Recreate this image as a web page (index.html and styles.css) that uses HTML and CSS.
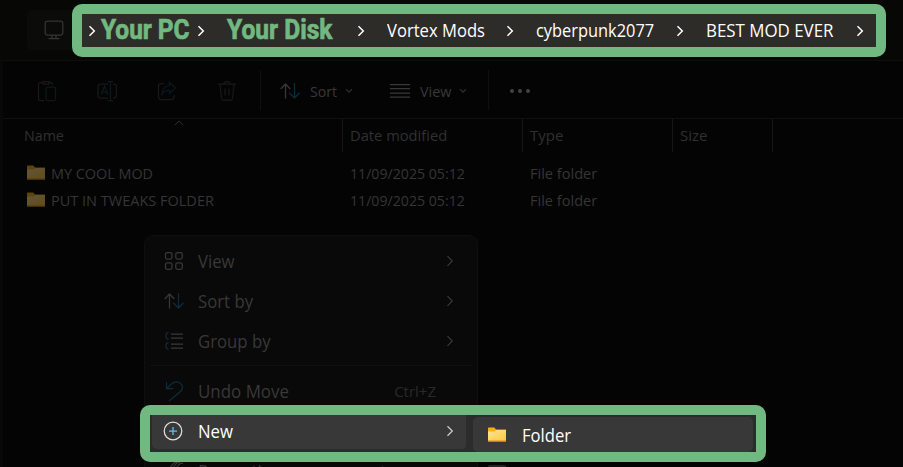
FILE: index.html
```html
<!DOCTYPE html>
<html lang="en">
<head>
<meta charset="utf-8">
<title>BEST MOD EVER - File Explorer</title>
<link rel="stylesheet" href="styles.css">
</head>
<body>
<svg class="defs" aria-hidden="true">
  <defs>
    <linearGradient id="gold" x1="0" y1="0" x2="1" y2="1"><stop offset="0" stop-color="#ffe69c"/><stop offset="1" stop-color="#ffc53a"/></linearGradient>
    <symbol id="chev" viewBox="0 0 8 12"><path d="M1.500 1.200 6.300 6 1.500 10.800"/></symbol>
    <symbol id="down" viewBox="0 0 8 6"><path d="M1 1.200 4 4.200 7 1.200"/></symbol>
    <symbol id="sort" viewBox="0 0 20 18"><path d="M5.500 16.500V2M.7 7 5.500 2l4.800 5"/><path class="blue" d="M14.500 1v15M9.200 10.800l5.300 5.200 5-5.200"/></symbol>
    <symbol id="folder" viewBox="0 0 18 15"><path fill="#f8ae17" d="M0 1.200Q0 .5.7.5h5.600L8 2.500h10v12H0z"/><path fill="url(#gold)" d="M0 4.500h6.600L8.200 3H18v10.700H0z"/><path fill="#dc991e" d="M0 13.500h18v1H0z"/></symbol>
  </defs>
</svg>
<div class="window">
  <header class="address">
    <div class="device"><svg width="20" height="20" viewBox="0 0 20 20"><rect x="1.200" y="1" width="17.600" height="14" rx="2.500"/><path d="M8 15v3M12 15v3M4.500 18.500h11"/></svg></div>
    <nav class="crumbs">
      <svg class="chev c1"><use href="#chev"/></svg><span class="brand pc">Your PC</span>
      <svg class="chev c2"><use href="#chev"/></svg><span class="brand disk">Your Disk</span>
      <svg class="chev c3"><use href="#chev"/></svg><span class="crumb t1">Vortex Mods</span>
      <svg class="chev c4"><use href="#chev"/></svg><span class="crumb t2">cyberpunk2077</span>
      <svg class="chev c5"><use href="#chev"/></svg><span class="crumb t3">BEST MOD EVER</span>
      <svg class="chev c6"><use href="#chev"/></svg>
    </nav>
  </header>
  <div class="toolbar">
    <div class="tools">
      <svg width="20" height="22" viewBox="0 0 20 22"><path d="M7 20.500H3.500Q1.500 20.500 1.500 18.500V4.500Q1.500 2.500 3.500 2.500H6M12 2.500H14Q15.700 2.500 15.700 5M6 1.500h6v2.500H6z"/><rect class="blue" x="9" y="7" width="9.500" height="13.500" rx="1.500"/></svg>
      <svg width="20" height="22" viewBox="0 0 20 22"><path d="M11 18H3.500Q1 18 1 15.500V6.500Q1 4 3.500 4H11M16 4Q20 4 19.500 7V15Q19.500 18 16 18"/><path class="blue" d="M4 15 7.500 6 11 15M5.200 12h4.600M13.500 1.500v19M11 1.500h5M11 20.500h5"/></svg>
      <svg width="20" height="22" viewBox="0 0 20 22"><path d="M7 3.500H4Q1.500 3.500 1.500 6V17Q1.500 19.500 4 19.500H14Q17 19.500 17 17V15"/><path class="blue" d="M12.500 2.500 18.500 8 12.500 13.500V10.500Q8 10 5 14.500 5.500 6 12.500 5.500z"/></svg>
      <svg width="20" height="22" viewBox="0 0 20 22"><path d="M1 4h18M3 4l1.500 14.500Q4.700 20 6 20h8Q15.300 20 15.500 18.500L17 4M7 4Q7 1.500 10 1.500T13 4M8 8.500v7M12 8.500v7"/></svg>
    </div>
    <div class="group sorting"><svg class="sort"><use href="#sort"/></svg><span>Sort</span><svg class="down"><use href="#down"/></svg></div>
    <div class="group viewing"><svg width="20" height="14" viewBox="0 0 20 14"><path d="M0 .5h20M0 4.500h20M0 9h20M0 13h20"/></svg><span>View</span><svg class="down"><use href="#down"/></svg></div>
    <div class="more"><i></i><i></i><i></i></div>
  </div>
  <main class="files">
    <div class="columns">
      <div class="name"><span>Name</span><svg class="asc" width="10" height="6" viewBox="0 0 10 6"><path d="M.8 5 5 1l4.200 4"/></svg></div><div><span class="date-label">Date modified</span></div><div>Type</div><div>Size</div>
    </div>
    <div class="file"><span class="name"><svg class="folder"><use href="#folder"/></svg><b class="n1">MY COOL MOD</b></span><span class="date">11/09/2025 05:12</span><span class="type">File folder</span></div>
    <div class="file"><span class="name"><svg class="folder"><use href="#folder"/></svg><b class="n2">PUT IN TWEAKS FOLDER</b></span><span class="date">11/09/2025 05:12</span><span class="type">File folder</span></div>
  </main>
</div>
<div class="menu">
  <div class="item"><svg width="20" height="20" viewBox="0 0 20 20"><rect x="1.500" y="1.500" width="6.500" height="6.500" rx="1.800"/><rect x="11.800" y="1.500" width="6.500" height="6.500" rx="1.800"/><rect x="1.500" y="11.800" width="6.500" height="6.500" rx="1.800"/><rect x="11.800" y="11.800" width="6.500" height="6.500" rx="1.800"/></svg><span class="m1">View</span><svg class="chev"><use href="#chev"/></svg></div>
  <div class="item"><svg class="sort"><use href="#sort"/></svg><span class="m2">Sort by</span><svg class="chev"><use href="#chev"/></svg></div>
  <div class="item"><svg width="20" height="20" viewBox="0 0 20 20"><path class="blue" d="M4.500 1.500Q2 1.500 2 4V5.500Q2 8 4.500 8M4.500 11.500Q2 11.500 2 14V15.500Q2 18 4.500 18"/><path d="M7 3h12M7 7h12M7 13h12M7 17h12"/></svg><span class="m3">Group by</span><svg class="chev"><use href="#chev"/></svg></div>
  <hr>
  <div class="item undo"><svg width="20" height="22" viewBox="0 0 20 22"><path class="blue" d="M2.500 2v6.500H9M2.500 8.500 8 3.500Q12 .5 16 3T17.500 10.500L5 21"/></svg><span class="m4">Undo Move</span><kbd>Ctrl+Z</kbd></div>
  <div class="item below"><svg width="20" height="20" viewBox="0 0 20 20"><path d="M6 7Q9 1 13 1M9 7Q12 1 16 1M13 6Q15 2 19 2"/></svg><span>Properties</span><kbd>Alt+Enter</kbd></div>
</div>
<div class="clipped"></div>
<div class="spotlight">
  <div class="choice new"><svg width="20" height="20" viewBox="0 0 20 20"><circle cx="10" cy="10" r="8.800"/><path class="bright" d="M10 6v8M6 10h8"/></svg><span>New</span><svg class="chev"><use href="#chev"/></svg></div>
  <div class="choice sub"><svg class="folder"><use href="#folder"/></svg><span>Folder</span></div>
</div>
</body>
</html>
```
FILE: styles.css
```css
* { box-sizing: border-box; }
body { margin: 0; width: 903px; height: 467px; position: relative; overflow: hidden; background: #040404; color: #383838; font-family: "Open Sans", "Noto Sans", sans-serif; font-size: 15px; }
svg { display: block; flex: none; fill: none; stroke: currentColor; stroke-width: 1.25; }
span, kbd, b { white-space: nowrap; transform-origin: 0 50%; }
.defs { position: absolute; width: 0; height: 0; }
.blue { stroke: #0c2c3d; }
.chev { width: 8px; height: 12px; }
.sort { width: 20px; height: 18px; }
.down { width: 8px; height: 6px; }
.folder { width: 18px; height: 15px; stroke: none; }
.window { height: 467px; border-left: 3px solid #080808; }
.address { display: flex; height: 61px; margin-left: -3px; padding-left: 27px; background: #070705; border-bottom: 1px solid #0e0e0e; }
.device { width: 45px; height: 40px; margin-top: 10px; padding: 10px 0 0 17px; border-radius: 5px 0 0 5px; background: #0b0b09; color: #353535; }
.crumbs { display: flex; align-items: center; width: 814px; height: 53px; margin-top: 4px; border: 10px solid #72b881; border-radius: 10px; background: #2e2c28; color: #fff; }
.crumbs .chev { stroke-width: 1.5; }
.crumbs span { flex: none; }
.c1 { margin-left: 6px; }
.brand { height: 33px; color: #72b881; font: 700 27px/32px "Roboto", sans-serif; -webkit-text-stroke: .7px #72b881; }
.pc { width: 91px; margin-left: 5px; transform: scaleX(.905); }
.c2 { margin-left: 5px; }
.disk { width: 108px; margin-left: 22px; transform: scaleX(.91); }
.c3 { margin-left: 22px; }
.crumb { font-size: 18px; line-height: 33px; }
.t1 { width: 98px; margin-left: 22px; transform: scaleX(.923); }
.c4 { margin-left: 21px; }
.t2 { width: 119px; margin-left: 22px; transform: scaleX(.91); }
.c5 { margin-left: 21px; }
.t3 { width: 128px; margin-left: 22px; transform: scaleX(.938); }
.c6 { margin-left: 22px; }
.toolbar { display: flex; align-items: center; height: 58px; border-bottom: 1px solid #101010; }
.tools { display: flex; gap: 40px; width: 258px; height: 40px; padding: 10px 0 0 34px; border-right: 1px solid #0f0f0f; color: #181818; }
.tools .blue { stroke: #0a1820; }
.group { display: flex; align-items: center; height: 40px; }
.group svg, .group span { margin-top: 2px; }
.sorting { width: 110px; padding-left: 19px; }
.sorting span { width: 27px; margin-left: 10px; margin-right: 8px; transform: scaleX(.94); }
.viewing { width: 118px; padding-left: 19px; border-right: 1px solid #0f0f0f; }
.viewing span { width: 32px; margin-left: 10px; margin-right: 7px; transform: scaleX(.96); }
.down { opacity: .8; }
.more { display: flex; gap: 4px; margin: 2px 0 0 21px; }
.more i { width: 4px; height: 4px; border-radius: 50%; background: #434343; }
.columns { display: grid; grid-template-columns: 340px 180px 150px 100px; height: 33px; line-height: 33px; color: #303030; }
.columns div { padding-left: 7px; border-right: 1px solid #171717; }
.columns span { display: inline-block; }
.columns .name { position: relative; padding-left: 21px; }
.columns .name span { transform: scaleX(.95); }
.columns .date-label { transform: scaleX(.98); }
.asc { position: absolute; left: 171px; top: 1px; stroke-width: 1; }
.file { display: grid; grid-template-columns: 347px 180px 150px; height: 27px; line-height: 27px; color: #353535; }
.columns + .file { margin-top: 8px; }
.file .name { display: flex; align-items: center; gap: 6px; padding-left: 24px; }
.file .folder { opacity: .37; margin-top: -3px; }
.file b { font-weight: 400; }
.n1 { transform: scaleX(.96); }
.n2 { transform: scaleX(.967); }
.date { transform: scaleX(.943); }
.type { transform: scaleX(.97); }
.menu { position: absolute; left: 144px; top: 235px; width: 334px; height: 232px; padding: 5px 0 0; border: 1px solid #0f0f0f; border-bottom: 0; border-radius: 9px 9px 0 0; background: #090909; font-size: 18px; overflow: hidden; }
.item { display: flex; align-items: center; height: 40px; padding: 0 24px 0 19px; }
.item span { margin-left: 14px; margin-top: -1px; transform: scaleX(.93); }
.item > .chev, .item kbd { margin-left: auto; }
.item > .chev { margin-right: -1px; margin-top: -1px; stroke-width: 1.2; }
.item kbd { font: 15px "Open Sans", sans-serif; margin-right: 17px; color: #292929; }
.menu hr { height: 1px; margin: 4px 5px 5px; border: 0; background: #101010; }
.item.undo span { margin-top: -1px; transform: scaleX(.94); }
.below { margin-top: 40px; }
.clipped { position: absolute; left: 488px; top: 465px; width: 18px; height: 2px; border-radius: 3px 3px 0 0; background: #242424; }
.spotlight { position: absolute; left: 140px; top: 405px; display: flex; width: 626px; height: 57px; border: 10px solid #72b881; border-radius: 10px; background: #2c2c2c; color: #fff; font-size: 18px; overflow: hidden; }
.choice { display: flex; background: #383838; align-items: center; }
.new { width: 314px; height: 34px; margin-left: 2px; padding: 0 12px 3px 11px; border-radius: 0 0 4px 5px; }
.new span { margin-left: 15px; padding-top: 1px; transform: scaleX(.93); }
.new .chev { margin-left: auto; color: #ccc; }
.new circle { stroke: #ddd; }
.bright { stroke: #5ac3f4; }
.sub { width: 280px; height: 35px; margin: 2px 0 0 7px; padding: 1px 0 0 15px; border-radius: 5px; }
.sub span { margin-left: 16px; margin-top: -1px; transform: scaleX(.925); }
.sub .folder { margin-top: -2px; }
```
